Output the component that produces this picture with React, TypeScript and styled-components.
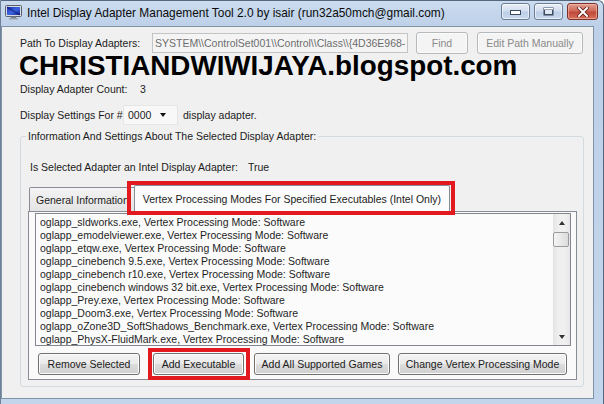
import React from 'react';
import styled, { createGlobalStyle } from 'styled-components';

const FONT = `"Liberation Sans", Arial, sans-serif`;

const GlobalStyle = createGlobalStyle`
  html, body { margin: 0; padding: 0; background: #ffffff; }
  body { font-family: ${FONT}; }
  * { box-sizing: border-box; }
`;

const Window = styled.div`
  position: relative;
  width: 604px;
  height: 404px;
  display: flex;
  flex-direction: column;
  background: linear-gradient(180deg, #cbdcef 0px, #bdd0e8 26px, #c3d5ea 100%);
  border-top: 1px solid #55687f;
  border-right: 1px solid #55687f;
  border-left: 1px solid #6f8097;
  border-top-right-radius: 6px;
  overflow: hidden;
`;

const TitleBar = styled.div`
  height: 25px;
  display: flex;
  align-items: flex-start;
  padding: 0 5px 0 4px;
  flex-shrink: 0;
`;

const AppIcon = styled.svg`
  margin-top: 4px;
  flex-shrink: 0;
`;

const TitleText = styled.div`
  margin-left: 5px;
  margin-top: 5px;
  font-size: 11.9px;
  line-height: 15px;
  color: #0b0b0b;
  white-space: nowrap;
  flex: 1;
`;

const Controls = styled.div`
  display: flex;
  gap: 4px;
  margin-top: 2px;
`;

const CapButton = styled.div<{ $w: number; $close?: boolean }>`
  width: ${(p) => p.$w}px;
  height: 17px;
  border: 1px solid ${(p) => (p.$close ? '#7a3128' : '#6b7d96')};
  border-radius: 3px;
  display: flex;
  align-items: center;
  justify-content: center;
  box-shadow: inset 0 0 0 1px ${(p) => (p.$close ? 'rgba(255,200,190,0.55)' : 'rgba(255,255,255,0.6)')};
  background: ${(p) =>
    p.$close
      ? 'linear-gradient(180deg, #e0a091 0%, #cf6a58 45%, #c2493a 55%, #d5705a 100%)'
      : 'linear-gradient(180deg, #e8eef7 0%, #d3dfee 45%, #bccee6 55%, #c9d9ee 100%)'};
`;

const Client = styled.div`
  flex: 1;
  margin: 0 9px 5px 0;
  border: 1px solid #7f93ab;
  background: #f0f0f0;
  padding: 5px 0 0 18px;
  display: flex;
  flex-direction: column;
  font-size: 10.5px;
  color: #1b1b1b;
`;

const Row = styled.div<{ $h: number; $mt?: number }>`
  display: flex;
  align-items: center;
  height: ${(p) => p.$h}px;
  margin-top: ${(p) => p.$mt ?? 0}px;
  white-space: nowrap;
`;

const Label = styled.span<{ $w?: number }>`
  display: inline-block;
  width: ${(p) => (p.$w ? `${p.$w}px` : 'auto')};
  flex-shrink: 0;
  white-space: nowrap;
`;

const TextBox = styled.div`
  width: 256px;
  height: 20px;
  flex-shrink: 0;
  border: 1px solid #c4c4c4;
  background: #f4f4f4;
  color: #6d6d6d;
  padding: 0 2px;
  line-height: 18px;
  overflow: hidden;
  white-space: nowrap;
`;

const TextBoxValue = styled.span`
  display: block;
  width: 250px;
  overflow: hidden;
  white-space: nowrap;
`;

const Button = styled.div<{ $w: number; $ml?: number; $disabled?: boolean }>`
  width: ${(p) => p.$w}px;
  height: 22px;
  margin-left: ${(p) => p.$ml ?? 0}px;
  flex-shrink: 0;
  border: 1px solid ${(p) => (p.$disabled ? '#b5b9bc' : '#707070')};
  border-radius: 3px;
  display: flex;
  align-items: center;
  justify-content: center;
  color: ${(p) => (p.$disabled ? '#8a8a8a' : '#1b1b1b')};
  background: ${(p) =>
    p.$disabled
      ? '#f4f4f4'
      : 'linear-gradient(180deg, #f3f3f3 0%, #ebebeb 48%, #dddddd 52%, #cfcfcf 100%)'};
  box-shadow: inset 0 0 0 1px ${(p) => (p.$disabled ? '#fbfbfb' : '#fcfcfc')};
  white-space: nowrap;
`;

const BigText = styled.div`
  font-size: 27.8px;
  font-weight: bold;
  line-height: 26px;
  height: 26px;
  margin-left: -1px;
  color: #000;
  white-space: nowrap;
`;

const Combo = styled.div`
  width: 55px;
  height: 20px;
  background: #f8f8f8;
  border: 1px solid #e6e6e6;
  display: flex;
  align-items: center;
  justify-content: space-between;
  padding: 0 11px 0 4px;
  margin-right: 5px;
`;

const DownTri = styled.span`
  width: 0;
  height: 0;
  border-left: 3.5px solid transparent;
  border-right: 3.5px solid transparent;
  border-top: 4px solid #111;
`;

const GroupBox = styled.fieldset`
  margin: 5px 0 0 0;
  width: 564px;
  height: 257px;
  border: 1px solid #d3dbe0;
  border-radius: 3px;
  padding: 0 6px 0 7px;
  min-width: 0;
  display: flex;
  flex-direction: column;
`;

const Legend = styled.legend`
  padding: 0 2px;
  margin-left: -2px;
  line-height: 13px;
  font-size: 10.5px;
`;

const InfoRow = styled.div`
  margin-top: 18px;
  padding-left: 2px;
  line-height: 13px;
  height: 13px;
  display: flex;
  white-space: nowrap;
`;

const TabStrip = styled.div`
  margin-top: 10px;
  height: 27px;
  display: flex;
  align-items: flex-end;
  padding-left: 1px;
`;

const Tab = styled.div<{ $active?: boolean }>`
  position: relative;
  height: ${(p) => (p.$active ? 27 : 24)}px;
  margin-left: ${(p) => (p.$active ? -2 : 0)}px;
  margin-bottom: ${(p) => (p.$active ? -1 : 0)}px;
  z-index: ${(p) => (p.$active ? 1 : 0)};
  padding: ${(p) => (p.$active ? '0 8px' : '0 6px')};
  border: 1px solid #898c95;
  border-bottom: none;
  border-radius: 2px 2px 0 0;
  display: flex;
  align-items: center;
  white-space: nowrap;
  background: ${(p) => (p.$active ? '#fcfcfc' : 'linear-gradient(180deg, #f3f3f3 0%, #e4e4e4 100%)')};
`;

const Panel = styled.div`
  height: 169px;
  border: 1px solid #898c95;
  background: #fafafa;
  padding: 1px 5px 4px 6px;
  display: flex;
  flex-direction: column;
`;

const ListBox = styled.div`
  height: 133px;
  border: 1px solid #828790;
  background: #fbfbfb;
  display: flex;
  overflow: hidden;
`;

const Items = styled.div`
  flex: 1;
  padding: 2px 0 0 4px;
  overflow: hidden;
`;

const Item = styled.div`
  line-height: 13px;
  height: 13px;
  white-space: nowrap;
  color: #1e1e1e;
`;

const ScrollBar = styled.div`
  width: 17px;
  display: flex;
  flex-direction: column;
  background: linear-gradient(90deg, #e3e3e3 0%, #efefef 30%, #f0f0f0 70%, #e6e6e6 100%);
`;

const ScrollArrow = styled.div<{ $down?: boolean }>`
  height: 17px;
  display: flex;
  align-items: center;
  justify-content: center;
  &::after {
    content: '';
    width: 0;
    height: 0;
    border-left: 3.5px solid transparent;
    border-right: 3.5px solid transparent;
    ${(p) => (p.$down ? 'border-top: 4px solid #333;' : 'border-bottom: 4px solid #333;')}
  }
`;

const Track = styled.div`
  flex: 1;
  padding: 1px 1px 0 0;
`;

const Thumb = styled.div`
  height: 15px;
  border: 1px solid #9c9c9c;
  border-radius: 2px;
  background: linear-gradient(90deg, #f4f4f4 0%, #e9e9e9 50%, #dcdcdc 100%);
`;

const ButtonRow = styled.div`
  margin-top: 7px;
  margin-left: 3px;
  display: flex;
`;

const Annotation = styled.div<{ $x: number; $y: number; $w: number; $h: number }>`
  position: absolute;
  left: ${(p) => p.$x - 1}px;
  top: ${(p) => p.$y - 1}px;
  width: ${(p) => p.$w}px;
  height: ${(p) => p.$h}px;
  border: 4px solid #e2191f;
  z-index: 5;
  pointer-events: none;
`;

const items = [
  'oglapp_sldworks.exe, Vertex Processing Mode: Software',
  'oglapp_emodelviewer.exe, Vertex Processing Mode: Software',
  'oglapp_etqw.exe, Vertex Processing Mode: Software',
  'oglapp_cinebench 9.5.exe, Vertex Processing Mode: Software',
  'oglapp_cinebench r10.exe, Vertex Processing Mode: Software',
  'oglapp_cinebench windows 32 bit.exe, Vertex Processing Mode: Software',
  'oglapp_Prey.exe, Vertex Processing Mode: Software',
  'oglapp_Doom3.exe, Vertex Processing Mode: Software',
  'oglapp_oZone3D_SoftShadows_Benchmark.exe, Vertex Processing Mode: Software',
  'oglapp_PhysX-FluidMark.exe, Vertex Processing Mode: Software',
];

const PATH = 'SYSTEM\\\\ControlSet001\\\\Control\\\\Class\\\\{4D36E968-E325-11CE-BFC1-08002BE10318}';

export default function App() {
  return (
    <>
      <GlobalStyle />
      <Window>
        <TitleBar>
          <AppIcon width="17" height="15" viewBox="0 0 17 15">
            <defs>
              <linearGradient id="scr" x1="0" y1="0" x2="1" y2="1">
                <stop offset="0" stopColor="#1d2fb8" />
                <stop offset="0.5" stopColor="#3b66e0" />
                <stop offset="1" stopColor="#1a2a9a" />
              </linearGradient>
            </defs>
            <rect x="0.5" y="0.5" width="16" height="11" rx="1" fill="#d9dde3" stroke="#59606b" />
            <rect x="2" y="2" width="13" height="8" fill="url(#scr)" />
            <path d="M2 2 L15 10" stroke="#0c1260" strokeWidth="1.4" opacity="0.6" />
            <rect x="6" y="11.5" width="5" height="1.5" fill="#7a818c" />
            <rect x="4" y="13" width="9" height="1.5" fill="#9aa1ab" />
          </AppIcon>
          <TitleText>Intel Display Adapter Management Tool 2.0 by isair (run32a50mch@gmail.com)</TitleText>
          <Controls>
            <CapButton $w={29}>
              <svg width="11" height="6" viewBox="0 0 11 6">
                <rect x="0.5" y="1.5" width="10" height="4" fill="#ffffff" stroke="#3c4a60" />
              </svg>
            </CapButton>
            <CapButton $w={29}>
              <svg width="11" height="9" viewBox="0 0 11 9">
                <rect x="0.5" y="0.5" width="10" height="8" fill="#3c4a60" />
                <rect x="2" y="3" width="7" height="4" fill="#dfe7f2" />
                <rect x="1" y="1" width="9" height="1.5" fill="#ffffff" />
              </svg>
            </CapButton>
            <CapButton $w={31} $close>
              <svg width="12" height="10" viewBox="0 0 12 10">
                <path d="M2 1 L10 9 M10 1 L2 9" stroke="#5a1a14" strokeWidth="3.6" strokeLinecap="square" />
                <path d="M2 1 L10 9 M10 1 L2 9" stroke="#ffffff" strokeWidth="2" strokeLinecap="square" />
              </svg>
            </CapButton>
          </Controls>
        </TitleBar>
        <Client>
          <Row $h={21}>
            <Label $w={132}>Path To Display Adapters:</Label>
            <TextBox>
              <TextBoxValue>{PATH}</TextBoxValue>
            </TextBox>
            <Button $w={52} $ml={8} $disabled>Find</Button>
            <Button $w={106} $ml={9} $disabled>Edit Path Manually</Button>
          </Row>
          <BigText>CHRISTIANDWIWIJAYA.blogspot.com</BigText>
          <Row $h={13} $mt={3}>
            <Label $w={120}>Display Adapter Count:</Label>
            <Label>3</Label>
          </Row>
          <Row $h={21} $mt={9}>
            <Label $w={103}>Display Settings For #</Label>
            <Combo>
              <span>0000</span>
              <DownTri />
            </Combo>
            <Label>display adapter.</Label>
          </Row>
          <GroupBox>
            <Legend>Information And Settings About The Selected Display Adapter:</Legend>
            <InfoRow>
              <Label $w={218}>Is Selected Adapter an Intel Display Adapter:</Label>
              <Label>True</Label>
            </InfoRow>
            <TabStrip>
              <Tab>General Information</Tab>
              <Tab $active>Vertex Processing Modes For Specified Executables (Intel Only)</Tab>
            </TabStrip>
            <Panel>
              <ListBox>
                <Items>
                  {items.map((t) => (
                    <Item key={t}>{t}</Item>
                  ))}
                </Items>
                <ScrollBar>
                  <ScrollArrow />
                  <Track>
                    <Thumb />
                  </Track>
                  <ScrollArrow $down />
                </ScrollBar>
              </ListBox>
              <ButtonRow>
                <Button $w={102}>Remove Selected</Button>
                <Button $w={91} $ml={13}>Add Executable</Button>
                <Button $w={136} $ml={10}>Add All Supported Games</Button>
                <Button $w={169} $ml={8}>Change Vertex Processing Mode</Button>
              </ButtonRow>
            </Panel>
          </GroupBox>
        </Client>
        <Annotation $x={127} $y={181} $w={328} $h={34} />
        <Annotation $x={148} $y={348} $w={102} $h={32} />
      </Window>
    </>
  );
}
